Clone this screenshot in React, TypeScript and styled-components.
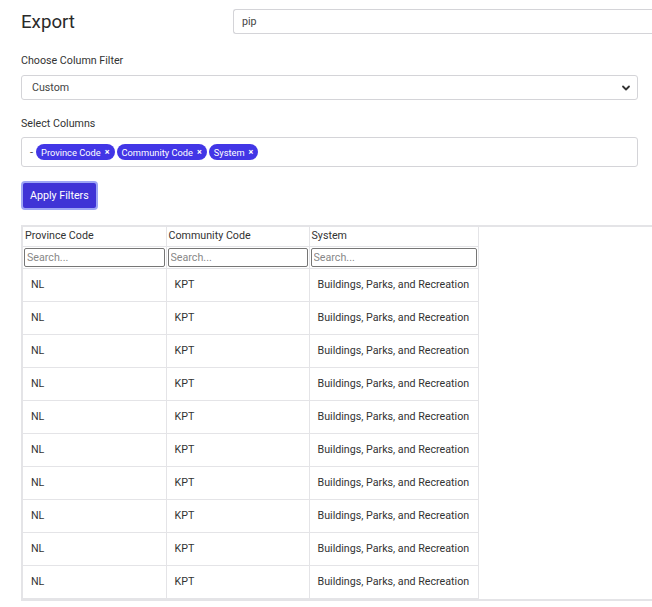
import React from "react";
import styled, { createGlobalStyle } from "styled-components";

const Global = createGlobalStyle`
  html, body { margin: 0; padding: 0; background: #fff; }
  body { font-family: Roboto, "Liberation Sans", sans-serif; color: #333; overflow: hidden; }
  * { box-sizing: border-box; }
`;

const Page = styled.div`
  padding: 9px 0 0 21px;
  width: 652px;
`;

const Header = styled.div`
  display: flex;
  align-items: center;
  height: 25px;
`;

const Title = styled.h1`
  margin: 0;
  width: 212px;
  flex-shrink: 0;
  font-size: 18.7px;
  font-weight: 400;
  color: #2a2a2a;
`;

const TopSearch = styled.input`
  flex-shrink: 0;
  width: 440px;
  height: 25px;
  border: 1px solid #d4d4d8;
  border-right: none;
  border-radius: 3px 0 0 3px;
  padding: 0 8px;
  font-family: inherit;
  font-size: 10.7px;
  color: #444;
  outline: none;
`;

const Label = styled.div<{ $top: number }>`
  font-size: 10.7px;
  color: #333;
  margin-top: ${(p) => p.$top}px;
  line-height: 13px;
`;

const SelectBox = styled.div`
  margin-top: 8px;
  width: 617px;
  height: 25px;
  border: 1px solid #d4d4d8;
  border-radius: 3px;
  display: flex;
  align-items: center;
  justify-content: space-between;
  padding: 0 6px 0 10px;
  font-size: 10.7px;
  color: #444;
`;

const MultiBox = styled.div`
  margin-top: 7px;
  width: 617px;
  height: 30px;
  border: 1px solid #d4d4d8;
  border-radius: 3px;
  display: flex;
  align-items: center;
  gap: 2px;
  padding: 0 8px;
  font-size: 11px;
  color: #444;
`;

const Dash = styled.span`
  margin-right: 1px;
`;

const Chip = styled.span`
  display: inline-flex;
  align-items: center;
  gap: 4px;
  height: 16px;
  padding: 0 5px;
  border-radius: 8px;
  background: #4236e6;
  color: #fff;
  font-size: 9.3px;
`;

const ChipX = styled.span`
  font-size: 9px;
  font-weight: 700;
`;

const Button = styled.button`
  margin-top: 14px;
  height: 29px;
  padding: 0 7px;
  background: #3f33d6;
  color: #fff;
  border: 2px solid #9ea6f5;
  border-radius: 4px;
  font-family: inherit;
  font-size: 10.7px;
  cursor: pointer;
`;

const TableWrap = styled.div`
  margin-top: 15px;
  border-top: 2px solid #e4e4e7;
  border-left: 2px solid #e4e4e7;
  border-bottom: 2px solid #e4e4e7;
  width: 640px;
`;

const Table = styled.table`
  border-collapse: collapse;
  width: 455px;
  table-layout: fixed;
  font-size: 10.7px;
  color: #333;
`;

const Th = styled.th`
  font-weight: 400;
  text-align: left;
  border: 1px solid #e4e4e7;
  border-top: none;
  height: 19px;
  padding: 0 2px;
  font-size: 10.7px;
  line-height: 12px;
  color: #333;
  white-space: nowrap;
  &:first-child { border-left: none; }
`;

const SearchCell = styled.td`
  border: 1px solid #e4e4e7;
  padding: 0 1px;
  height: 22px;
  &:first-child { border-left: none; }
`;

const SmallSearch = styled.input`
  display: block;
  width: 100%;
  height: 19px;
  border: 1px solid #767676;
  border-radius: 2px;
  padding: 0 2px;
  font-family: inherit;
  font-size: 10.7px;
  outline: none;
  &::placeholder { color: #888; }
`;

const Td = styled.td`
  border: 1px solid #e4e4e7;
  height: 33px;
  padding: 0 6px 0 8px;
  font-size: 10.7px;
  line-height: 12px;
  color: #333;
  white-space: nowrap;
  &:first-child { border-left: none; }
`;

const Chevron = () => (
  <svg width="10" height="10" viewBox="0 0 10 10">
    <path d="M2 3.5 L5 6.5 L8 3.5" fill="none" stroke="#333" strokeWidth="1.8" strokeLinecap="round" strokeLinejoin="round" />
  </svg>
);

const rows = Array.from({ length: 10 }, () => ["NL", "KPT", "Buildings, Parks, and Recreation"]);

export default function App() {
  return (
    <>
      <Global />
      <Page>
        <Header>
          <Title>Export</Title>
          <TopSearch defaultValue="pip" />
        </Header>
        <Label $top={20}>Choose Column Filter</Label>
        <SelectBox>
          <span>Custom</span>
          <Chevron />
        </SelectBox>
        <Label $top={17}>Select Columns</Label>
        <MultiBox>
          <Dash>-</Dash>
          <Chip>Province Code <ChipX>×</ChipX></Chip>
          <Chip>Community Code <ChipX>×</ChipX></Chip>
          <Chip>System <ChipX>×</ChipX></Chip>
        </MultiBox>
        <Button>Apply Filters</Button>
        <TableWrap>
          <Table>
            <colgroup>
              <col style={{ width: 143 }} />
              <col style={{ width: 143 }} />
              <col style={{ width: 169 }} />
            </colgroup>
            <thead>
              <tr>
                <Th>Province Code</Th>
                <Th>Community Code</Th>
                <Th>System</Th>
              </tr>
              <tr>
                <SearchCell><SmallSearch placeholder="Search..." /></SearchCell>
                <SearchCell><SmallSearch placeholder="Search..." /></SearchCell>
                <SearchCell><SmallSearch placeholder="Search..." /></SearchCell>
              </tr>
            </thead>
            <tbody>
              {rows.map((r, i) => (
                <tr key={i}>
                  {r.map((c, j) => (
                    <Td key={j}>{c}</Td>
                  ))}
                </tr>
              ))}
            </tbody>
          </Table>
        </TableWrap>
      </Page>
    </>
  );
}
